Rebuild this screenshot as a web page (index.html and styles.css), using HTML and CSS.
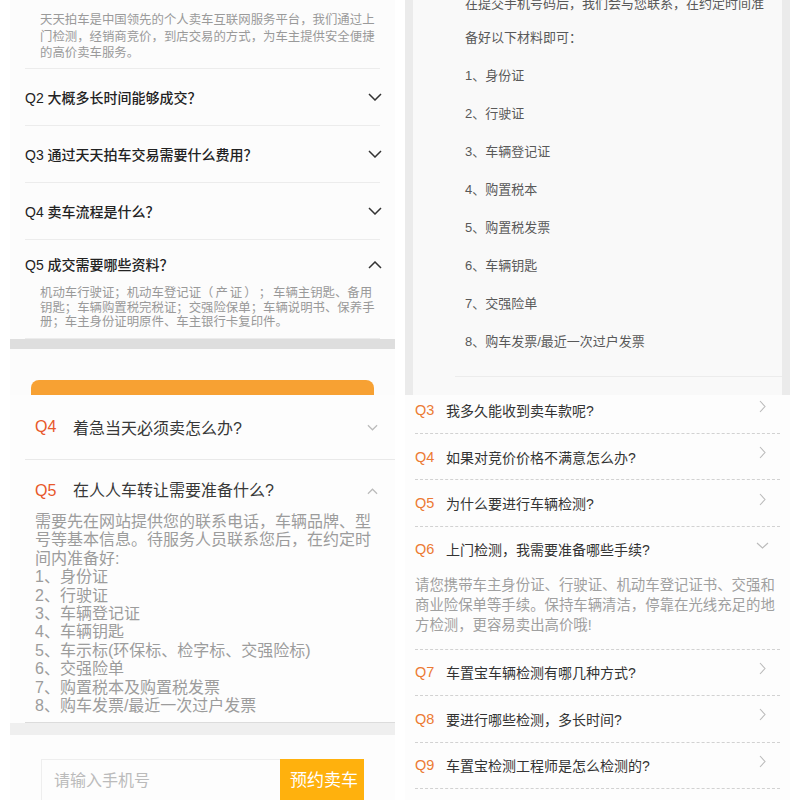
FILE: index.html
```html
<!DOCTYPE html>
<html lang="zh-CN">
<head>
  <meta charset="UTF-8" />
  <meta name="viewport" content="width=device-width, initial-scale=1.0" />
  <title>卖车常见问题</title>
  <link rel="stylesheet" href="styles.css">
</head>
<body>
  <div class="collage">

    <!-- 天天拍车 -->
    <section class="panel tl">
      <p class="tl-intro">天天拍车是中国领先的个人卖车互联网服务平台，我们通过上<br>门检测，经销商竞价，到店交易的方式，为车主提供安全便捷<br>的高价卖车服务。</p>
      <div class="tl-list">
        <div class="tl-row">
          <span>Q2 大概多长时间能够成交？</span>
          <svg class="tl-arrow" viewBox="0 0 14 8"><path d="M1 1 L7 7 L13 1"/></svg>
        </div>
        <div class="tl-row">
          <span>Q3 通过天天拍车交易需要什么费用？</span>
          <svg class="tl-arrow" viewBox="0 0 14 8"><path d="M1 1 L7 7 L13 1"/></svg>
        </div>
        <div class="tl-row">
          <span>Q4 卖车流程是什么？</span>
          <svg class="tl-arrow" viewBox="0 0 14 8"><path d="M1 1 L7 7 L13 1"/></svg>
        </div>
        <div class="tl-open">
          <div class="tl-head">
            <span>Q5 成交需要哪些资料？</span>
            <svg class="tl-arrow" viewBox="0 0 14 8"><path d="M1 7 L7 1 L13 7"/></svg>
          </div>
          <p class="tl-answer">机动车行驶证；机动车登记证<span class="tl-wide">（产证）；</span>车辆主钥匙、备用<br>钥匙；车辆购置税完税证；交强险保单；车辆说明书、保养手<br>册；车主身份证明原件、车主银行卡复印件。</p>
        </div>
      </div>
      <div class="tl-band"></div>
      <div class="tl-btn"></div>
    </section>

    <!-- 材料清单 -->
    <section class="panel tr">
      <div class="tr-list">
        <p><span class="tr-cut">在提交手机号码后，我们会与您联系，在约定时间准</span>备好以下材料即可：</p>
        <p>1、身份证</p>
        <p>2、行驶证</p>
        <p>3、车辆登记证</p>
        <p>4、购置税本</p>
        <p>5、购置税发票</p>
        <p>6、车辆钥匙</p>
        <p>7、交强险单</p>
        <p>8、购车发票/最近一次过户发票</p>
      </div>
    </section>

    <!-- 人人车 -->
    <section class="panel bl">
      <div class="bl-row">
        <span class="bl-q">Q4</span>
        <span class="bl-text">着急当天必须卖怎么办?</span>
        <svg class="bl-arrow" viewBox="0 0 12 7"><path d="M1 1 L6 6 L11 1"/></svg>
      </div>
      <div class="bl-open">
        <div class="bl-head">
          <span class="bl-q">Q5</span>
          <span class="bl-text">在人人车转让需要准备什么?</span>
          <svg class="bl-arrow" viewBox="0 0 12 7"><path d="M1 6 L6 1 L11 6"/></svg>
        </div>
        <div class="bl-answer">
          <span>需要先在网站提供您的联系电话，车辆品牌、型</span>
          <span>号等基本信息。待服务人员联系您后，在约定时</span>
          <span>间内准备好:</span>
          <span>1、身份证</span>
          <span>2、行驶证</span>
          <span>3、车辆登记证</span>
          <span>4、车辆钥匙</span>
          <span>5、车示标(环保标、检字标、交强险标)</span>
          <span>6、交强险单</span>
          <span>7、购置税本及购置税发票</span>
          <span>8、购车发票/最近一次过户发票</span>
        </div>
      </div>
      <div class="bl-band"></div>
      <div class="bl-form">
        <div class="bl-input">请输入手机号</div>
        <div class="bl-submit">预约卖车</div>
      </div>
    </section>

    <!-- 车置宝 -->
    <section class="panel br">
      <div class="br-list">
        <div class="br-row">
          <span class="br-q">Q3</span>
          <span class="br-text">我多久能收到卖车款呢?</span>
          <svg class="br-arrow" viewBox="0 0 7 13"><path d="M1 1 L6 6.5 L1 12"/></svg>
        </div>
        <div class="br-row">
          <span class="br-q">Q4</span>
          <span class="br-text">如果对竞价价格不满意怎么办?</span>
          <svg class="br-arrow" viewBox="0 0 7 13"><path d="M1 1 L6 6.5 L1 12"/></svg>
        </div>
        <div class="br-row">
          <span class="br-q">Q5</span>
          <span class="br-text">为什么要进行车辆检测?</span>
          <svg class="br-arrow" viewBox="0 0 7 13"><path d="M1 1 L6 6.5 L1 12"/></svg>
        </div>
        <div class="br-open">
          <div class="br-head">
            <span class="br-q">Q6</span>
            <span class="br-text">上门检测，我需要准备哪些手续?</span>
            <svg class="br-down" viewBox="0 0 13 7"><path d="M1 1 L6.5 6 L12 1"/></svg>
          </div>
          <div class="br-answer">
            <span>请您携带车主身份证、行驶证、机动车登记证书、交强和</span>
            <span>商业险保单等手续。保持车辆清洁，停靠在光线充足的地</span>
            <span>方检测，更容易卖出高价哦!</span>
          </div>
        </div>
        <div class="br-row">
          <span class="br-q">Q7</span>
          <span class="br-text">车置宝车辆检测有哪几种方式?</span>
          <svg class="br-arrow" viewBox="0 0 7 13"><path d="M1 1 L6 6.5 L1 12"/></svg>
        </div>
        <div class="br-row">
          <span class="br-q">Q8</span>
          <span class="br-text">要进行哪些检测，多长时间?</span>
          <svg class="br-arrow" viewBox="0 0 7 13"><path d="M1 1 L6 6.5 L1 12"/></svg>
        </div>
        <div class="br-row">
          <span class="br-q">Q9</span>
          <span class="br-text">车置宝检测工程师是怎么检测的?</span>
          <svg class="br-arrow" viewBox="0 0 7 13"><path d="M1 1 L6 6.5 L1 12"/></svg>
        </div>
      </div>
    </section>

  </div>
</body>
</html>
```

FILE: styles.css
```css
body {
  margin: 0;
  background: #fff;
  font-family: "Liberation Sans", "Noto Sans CJK SC", sans-serif;
  text-spacing-trim: space-all;
}
.collage {
  display: grid;
  grid-template-columns: 385px 385px;
  grid-template-rows: 395px 405px;
  column-gap: 10px;
  padding-left: 10px;
}
.panel {
  overflow: hidden;
  white-space: nowrap;
}

/* top left */
.tl {
  background: #fcfcfc;
}
.tl-intro {
  margin: 0;
  padding: 12px 0 6.5px 30px;
  font-size: 12.4px;
  line-height: 16.5px;
  color: #9a9a9a;
}
.tl-list {
  margin: 0 15px;
}
.tl-row, .tl-open {
  border-top: 1px solid #ececec;
}
.tl-open {
  border-bottom: 1px solid #ececec;
}
.tl-row {
  height: 56px;
  display: flex;
  align-items: center;
  justify-content: space-between;
}
.tl-head {
  display: flex;
  align-items: center;
  justify-content: space-between;
  padding: 14px 0 10px;
  line-height: 22px;
}
.tl-row span, .tl-head span {
  font-size: 14px;
  font-weight: 500;
  color: #222;
}
.tl-arrow {
  width: 14px;
  height: 8px;
  margin-right: -2px;
  fill: none;
  stroke: #333;
  stroke-width: 1.5;
}
.tl-answer {
  margin: 0;
  padding: 0 0 8.5px 15px;
  font-size: 12.4px;
  line-height: 14.5px;
  color: #999;
}
.tl-wide {
  letter-spacing: 2px;
}
.tl-band {
  height: 10px;
  background: #dedede;
}
.tl-btn {
  height: 40px;
  margin: 31px 21px 0;
  border-radius: 8px;
  background: #f7a133;
}

/* top right */
.tr {
  background: #f9f9f9;
  border-left: 8px solid #ebebeb;
  border-right: 8px solid #ebebeb;
}
.tr-list {
  margin: -15px 0 0 42px;
  padding: 0 0 11px 10px;
  border-bottom: 1px solid #ececec;
}
.tr-list p {
  margin: 0 0 8px;
  font-size: 13px;
  line-height: 30px;
  color: #595959;
}
.tr-cut {
  display: block;
  line-height: 38px;
}

/* bottom left */
.bl {
  background: #fdfdfd;
}
.bl-row, .bl-head {
  display: flex;
  align-items: center;
  margin-left: 15px;
  padding: 0 17px 0 10px;
}
.bl-row {
  height: 64px;
  border-bottom: 1px solid #e9e9e9;
}
.bl-head {
  padding-top: 20px;
  line-height: 22px;
}
.bl-q {
  width: 38px;
  font-size: 16px;
  color: #e8582b;
}
.bl-text {
  flex: 1;
  font-size: 16px;
  color: #383838;
}
.bl-arrow {
  width: 11px;
  height: 7px;
  fill: none;
  stroke: #bbb;
  stroke-width: 1.3;
}
.bl-open {
  border-bottom: 1px solid #dcdcdc;
  margin-left: 15px;
}
.bl-open .bl-head {
  margin-left: 0;
}
.bl-answer {
  display: flex;
  flex-direction: column;
  padding: 11px 0 6.6px 10px;
  font-size: 16px;
  line-height: 18.4px;
  color: #9c9c9c;
}
.bl-band {
  height: 12px;
  background: #efefef;
}
.bl-form {
  display: flex;
  margin: 24px 0 0 31px;
  height: 42px;
}
.bl-input {
  width: 226px;
  padding-left: 12px;
  border: 1px solid #eee;
  border-right: none;
  font-size: 16px;
  line-height: 42px;
  color: #bbb;
}
.bl-submit {
  width: 84px;
  padding-left: 10px;
  box-sizing: border-box;
  background: #ffb10d;
  font-size: 17px;
  line-height: 44px;
  color: #fff;
}

/* bottom right */
.br {
  background: #fdfdfd;
}
.br-list {
  margin: -7.4px 10px 0;
}
.br-row, .br-open {
  border-bottom: 1px dashed #d2d2d2;
}
.br-row, .br-head {
  display: flex;
  align-items: center;
  height: 45.4px;
  padding-right: 14px;
}
.br-head {
  height: 45px;
}
.br-q {
  width: 31px;
  font-size: 14.5px;
  color: #ec7a34;
}
.br-text {
  flex: 1;
  font-size: 14px;
  color: #333;
}
.br-arrow {
  width: 7px;
  height: 13px;
  margin-top: -8px;
  fill: none;
  stroke: #bbb;
  stroke-width: 1.1;
}
.br-down {
  width: 13px;
  height: 7px;
  margin: -8px -3px 0 0;
  fill: none;
  stroke: #bbb;
  stroke-width: 1.1;
}
.br-answer {
  display: flex;
  flex-direction: column;
  padding: 3px 0 14px;
  font-size: 14.4px;
  line-height: 20px;
  color: #a0a0a0;
}
```
